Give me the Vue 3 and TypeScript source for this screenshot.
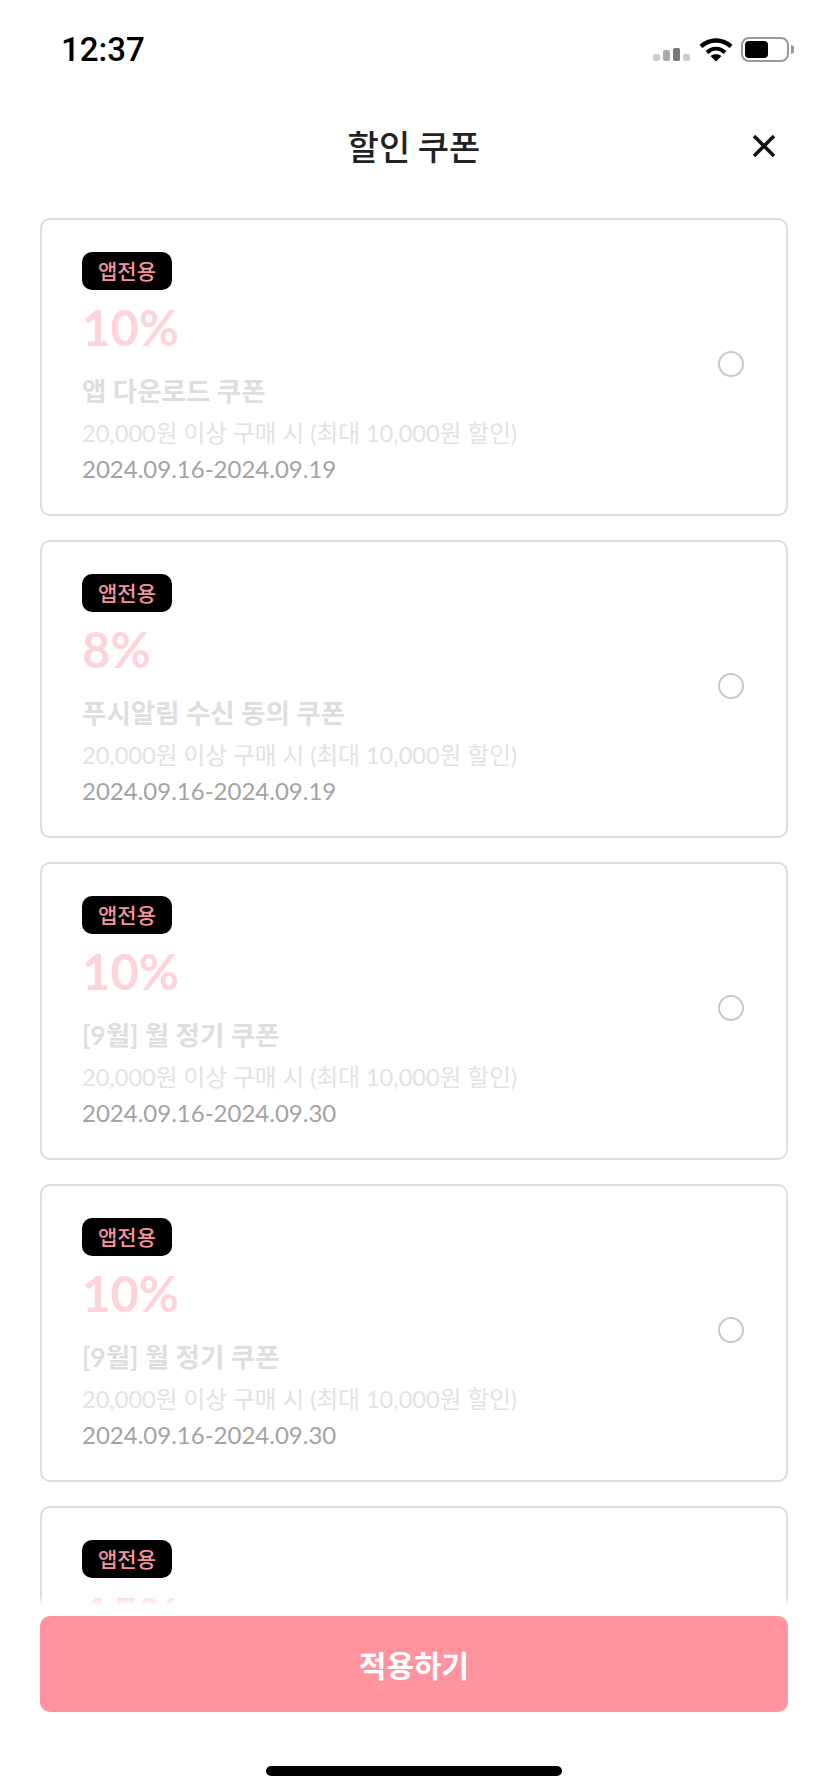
<script setup lang="ts">
interface Coupon {
  rate: string
  name: string
  period: string
}

const coupons: Coupon[] = [
  { rate: '10%', name: '앱 다운로드 쿠폰', period: '2024.09.16-2024.09.19' },
  { rate: '8%', name: '푸시알림 수신 동의 쿠폰', period: '2024.09.16-2024.09.19' },
  { rate: '10%', name: '[9월] 월 정기 쿠폰', period: '2024.09.16-2024.09.30' },
  { rate: '10%', name: '[9월] 월 정기 쿠폰', period: '2024.09.16-2024.09.30' },
  { rate: '15%', name: '[9월] 월 정기 쿠폰', period: '2024.09.16-2024.09.30' },
]
</script>

<template>
  <div class="page">
    <div class="status">
      <span class="time">12:37</span>
      <div class="status-icons">
        <div class="signal">
          <i class="bar b1"></i>
          <i class="bar b2"></i>
          <i class="bar b3"></i>
          <i class="bar b4"></i>
        </div>
        <svg class="wifi" width="34" height="25" viewBox="0 0 34 25" fill="none">
          <path d="M2 9.5C10.5 1.5 23.5 1.5 32 9.5" stroke="#000" stroke-width="4.4" />
          <path d="M8 15.5C13.5 10.5 20.5 10.5 26 15.5" stroke="#000" stroke-width="4.2" />
          <path d="M11.5 19L17 24.5L22.5 19C19 16.5 15 16.5 11.5 19Z" fill="#000" />
        </svg>
        <div class="battery">
          <div class="battery-body"><div class="battery-fill"></div></div>
          <div class="battery-nub"></div>
        </div>
      </div>
    </div>

    <header class="head">
      <h1 class="head-title">할인 쿠폰</h1>
      <svg class="close" width="24" height="22" viewBox="0 0 24 22" fill="none">
        <path d="M2 1L22 21M22 1L2 21" stroke="#111" stroke-width="3.6" />
      </svg>
    </header>

    <div class="list-wrap">
      <div class="list">
        <div v-for="(coupon, i) in coupons" :key="i" class="card">
          <div class="info">
            <span class="badge">앱전용</span>
            <div class="rate">{{ coupon.rate }}</div>
            <div class="name">{{ coupon.name }}</div>
            <div class="cond">20,000원 이상 구매 시 (최대 10,000원 할인)</div>
            <div class="period">{{ coupon.period }}</div>
          </div>
          <span class="radio"></span>
        </div>
      </div>
      <div class="fade"></div>
    </div>

    <div class="footer">
      <button class="apply" type="button">적용하기</button>
    </div>

    <div class="home-wrap"><div class="home-bar"></div></div>
  </div>
</template>

<style>
html,
body {
  margin: 0;
  background: #fff;
}
</style>

<style scoped>
.page {
  width: 828px;
  height: 1792px;
  display: flex;
  flex-direction: column;
  overflow: hidden;
  background: #fff;
  font-family: Lato, "Noto Sans CJK KR", sans-serif;
}

.status {
  height: 88px;
  flex: none;
  display: flex;
  justify-content: space-between;
  align-items: flex-start;
  padding: 30px 34px 0 61px;
  box-sizing: border-box;
}

.time {
  font-family: Roboto, sans-serif;
  font-size: 33px;
  font-weight: 500;
  line-height: 40px;
  color: #000;
}

.status-icons {
  display: flex;
  align-items: flex-start;
  padding-top: 7px;
}

.signal {
  display: flex;
  align-items: flex-end;
  gap: 3px;
  height: 24px;
  margin-right: 9px;
}

.bar {
  display: block;
  width: 7px;
  border-radius: 2px;
}

.b1,
.b4 {
  height: 7px;
  background: #ccc;
}

.b2 {
  height: 11px;
  background: #aaa;
}

.b3 {
  height: 13px;
  background: #777;
}

.wifi {
  margin-right: 8px;
}

.battery {
  display: flex;
  align-items: center;
}

.battery-body {
  width: 48px;
  height: 25px;
  box-sizing: border-box;
  border: 2px solid #999;
  border-radius: 8px;
  padding: 2px;
}

.battery-fill {
  width: 23px;
  height: 100%;
  background: #000;
  border-radius: 4px;
}

.battery-nub {
  width: 3px;
  height: 9px;
  margin-left: 2px;
  background: #999;
  border-radius: 0 3px 3px 0;
}

.head {
  position: relative;
  height: 114px;
  flex: none;
  display: flex;
  align-items: center;
  justify-content: center;
}

.head-title {
  margin: 0;
  font-family: "Noto Sans CJK KR", sans-serif;
  font-size: 34px;
  font-weight: 500;
  color: #222;
}

.close {
  position: absolute;
  right: 52px;
  top: 47px;
}

.list-wrap {
  position: relative;
  height: 1388px;
  margin-top: 16px;
  flex: none;
  overflow: hidden;
}

.list {
  padding: 0 40px;
  display: flex;
  flex-direction: column;
  gap: 24px;
}

.fade {
  position: absolute;
  left: 0;
  right: 0;
  bottom: 0;
  height: 10px;
  background: linear-gradient(to bottom, rgba(255, 255, 255, 0), #fff);
}

.card {
  flex: none;
  height: 298px;
  box-sizing: border-box;
  border: 2px solid #ddd;
  border-radius: 10px;
  padding: 32px 42px 0 40px;
  display: flex;
  justify-content: space-between;
  align-items: flex-start;
}

.info {
  display: flex;
  flex-direction: column;
  align-items: flex-start;
}

.badge {
  width: 90px;
  height: 38px;
  border-radius: 10px;
  background: #000;
  color: #f4929e;
  font-size: 21px;
  font-weight: 500;
  line-height: 37px;
  text-align: center;
}

.rate {
  margin-top: 9px;
  font-size: 49px;
  font-weight: 700;
  line-height: 56px;
  color: #ffd3dc;
}

.name {
  margin-top: 18px;
  font-size: 26.5px;
  font-weight: 700;
  line-height: 36px;
  color: #dedede;
}

.cond {
  margin-top: 7px;
  font-size: 23.6px;
  line-height: 34px;
  color: #e2e2e2;
}

.period {
  margin-top: 2px;
  font-size: 24px;
  line-height: 34px;
  color: #a3a3a3;
}

.radio {
  flex: none;
  width: 26px;
  height: 26px;
  margin-top: 99px;
  box-sizing: border-box;
  border: 2px solid #c8c8c8;
  border-radius: 50%;
}

.footer {
  flex: none;
  padding: 10px 40px 0;
}

.apply {
  display: block;
  width: 100%;
  height: 96px;
  border: 0;
  border-radius: 10px;
  background: #ff949f;
  color: #fff;
  font-family: "Noto Sans CJK KR", sans-serif;
  font-size: 30px;
  font-weight: 700;
}

.home-wrap {
  flex: none;
  padding-top: 54px;
  display: flex;
  justify-content: center;
}

.home-bar {
  width: 296px;
  height: 10px;
  border-radius: 5px;
  background: #000;
}
</style>
